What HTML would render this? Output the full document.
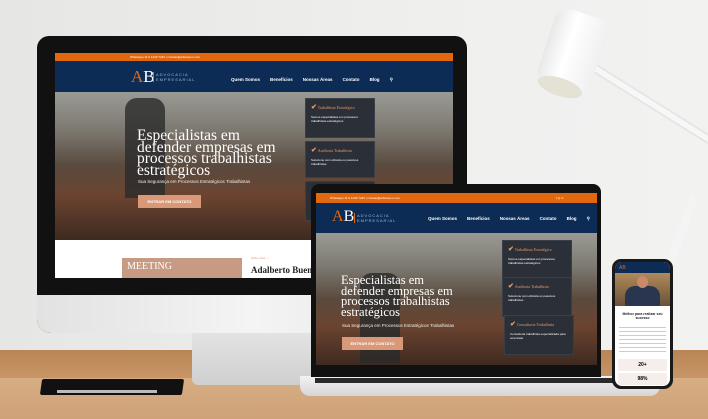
<!DOCTYPE html>
<html><head><meta charset="utf-8"><style>
*{margin:0;padding:0;box-sizing:border-box}
body{width:708px;height:419px;overflow:hidden;position:relative;background:#ebebea;font-family:"Liberation Sans",sans-serif}
.a{position:absolute}
.serif{font-family:"Liberation Serif",serif;color:#fff}
.nav span{margin-left:10px}
.card{position:absolute;background:#2b2f38;color:#fff;border:1px solid #3a3e48}
.card b{color:#e39a6a;font-family:"Liberation Serif",serif;font-weight:normal}
.ck{color:#e39a6a;font-weight:bold}
.hero{background:linear-gradient(180deg,#9a9a94 0%,#7d7a72 25%,#5a4a3e 50%,#6b4430 70%,#3e2a20 100%)}
</style></head><body>
<div class="a" style="left:0;top:0;width:708px;height:350px;background:linear-gradient(90deg,#e6e6e4,#efefee 60%,#f2f2f1)"></div>
<div class="a" style="left:0;top:350px;width:708px;height:28px;background:linear-gradient(#b98556,#c89566)"></div>
<div class="a" style="left:0;top:378px;width:708px;height:41px;background:linear-gradient(#d7ad84,#cfa277)"></div>
<div class="a" style="left:592px;top:70px;width:6px;height:190px;background:#f7f7f7;transform:rotate(-58deg);transform-origin:top left;box-shadow:0 1px 2px #bbb"></div>
<div class="a" style="left:545px;top:12px;width:55px;height:80px;background:linear-gradient(90deg,#e8e8e8,#fff 40%,#f0f0f0);border-radius:14px;transform:rotate(18deg)"></div>
<div class="a" style="left:537px;top:78px;width:46px;height:18px;background:#e4e2d4;border-radius:50%;transform:rotate(18deg)"></div>
<div class="a" style="left:660px;top:190px;width:8px;height:180px;background:#f4f4f4;transform:rotate(20deg)"></div>
<div class="a" style="left:192px;top:330px;width:122px;height:55px;background:linear-gradient(#e4e4e4,#cfcfcf);border-radius:0 0 6px 6px"></div>
<div class="a" style="left:37px;top:36px;width:430px;height:297px;background:#111;border-radius:12px 12px 14px 14px;overflow:hidden">
 <div class="a" style="left:0;top:259px;width:430px;height:38px;background:linear-gradient(90deg,#e2e2e2,#f4f4f4 50%,#e4e4e4)"></div>
</div>
<div class="a" style="left:55px;top:53px;width:398px;height:225px;background:#fff;overflow:hidden">
 <div class="a" style="left:0;top:0;width:398px;height:8px;background:#e2680f;font-size:3px;color:#fff;padding:2px 0 0 75px">Whatsapp 11 9 1240 7240 | contato@advbueno.com</div>
 <div class="a" style="left:0;top:8px;width:398px;height:31px;background:#0d2c55"></div>
 <div class="a serif" style="left:76px;top:14px;font-size:17px;color:#fff"><span style="color:#e2680f">A</span>B</div>
 <div class="a" style="left:98px;top:19px;font-size:4px;color:#9fb6d6;letter-spacing:1px;line-height:5px;border-left:1px solid #e2680f;padding-left:2px">ADVOCACIA<br>EMPRESARIAL</div>
 <div class="a nav" style="left:166px;top:24px;font-size:4.5px;color:#fff;font-weight:bold"><span>Quem Somos</span><span>Benefícios</span><span>Nossas Áreas</span><span>Contato</span><span>Blog</span><span>⚲</span></div>
 <div class="a hero" style="left:0;top:39px;width:398px;height:148px"></div>
 <div class="a" style="left:70px;top:45px;width:40px;height:100px;background:#2a2a2a;border-radius:12px 12px 0 0;opacity:.8"></div>
 <div class="a serif" style="left:82px;top:77px;font-size:15.5px;line-height:11.5px">Especialistas em<br>defender empresas em<br>processos trabalhistas<br>estratégicos</div>
 <div class="a" style="left:83px;top:126px;font-size:4.5px;color:#eee">Sua Segurança em Processos Estratégicos Trabalhistas</div>
 <div class="a" style="left:83px;top:142px;width:63px;height:13px;background:#d99878;color:#fff;font-size:4px;font-weight:bold;text-align:center;line-height:13px">ENTRAR EM CONTATO</div>
 <div class="card" style="left:250px;top:45px;width:70px;height:40px;padding:4px 5px;font-size:3px"><span class="ck" style="font-size:7px">✔</span> <b style="font-size:4px">Trabalhista Estratégico</b><br><br>Somos especialistas em processos trabalhistas estratégicos</div>
 <div class="card" style="left:250px;top:88px;width:70px;height:37px;padding:4px 5px;font-size:3px"><span class="ck" style="font-size:7px">✔</span> <b style="font-size:4px">Auditoria Trabalhista</b><br><br>Solucione com eficácia os passivos trabalhistas</div>
 <div class="card" style="left:250px;top:128px;width:70px;height:40px;padding:4px 5px"><span class="ck" style="font-size:7px">✔</span></div>
 <div class="a" style="left:67px;top:205px;width:120px;height:20px;background:#c79a84"></div>
 <div class="a" style="left:72px;top:208px;font-size:10px;color:#fff;font-family:'Liberation Serif',serif">MEETING</div>
 <div class="a" style="left:196px;top:203px;font-size:3px;color:#e39a6a">Sobre Nós —</div>
 <div class="a" style="left:196px;top:212px;font-size:9px;color:#222;font-family:'Liberation Serif',serif;font-weight:bold">Adalberto Bueno</div>
</div>
<div class="a" style="left:41px;top:379px;width:142px;height:16px;background:#111;border-radius:2px;transform:skewX(-8deg)"></div>
<div class="a" style="left:57px;top:390px;width:100px;height:3px;background:#bbb"></div>
<div class="a" style="left:300px;top:376px;width:360px;height:20px;background:linear-gradient(#f2f2f2,#d6d6d6);border-radius:0 0 10px 10px"></div>
<div class="a" style="left:315px;top:378px;width:300px;height:5px;background:#2a2a2a"></div>
<div class="a" style="left:311px;top:184px;width:290px;height:193px;background:#111;border-radius:8px 8px 0 0"></div>
<div class="a" style="left:316px;top:193px;width:281px;height:172px;background:#fff;overflow:hidden">
 <div class="a" style="left:0;top:0;width:281px;height:10px;background:#e2680f;font-size:3px;color:#fff;padding:3px 0 0 14px">Whatsapp 11 9 1240 7240 | contato@advbueno.com<span style="position:absolute;left:240px">f ◎ in</span></div>
 <div class="a" style="left:0;top:10px;width:281px;height:30px;background:#0d2c55"></div>
 <div class="a serif" style="left:16px;top:15px;font-size:16px"><span style="color:#e2680f">A</span>B</div>
 <div class="a" style="left:38px;top:20px;font-size:4px;color:#9fb6d6;letter-spacing:1px;line-height:5px;border-left:1px solid #e2680f;padding-left:2px">ADVOCACIA<br>EMPRESARIAL</div>
 <div class="a nav" style="left:102px;top:23px;font-size:4.5px;color:#fff;font-weight:bold"><span>Quem Somos</span><span>Benefícios</span><span>Nossas Áreas</span><span>Contato</span><span>Blog</span><span>⚲</span></div>
 <div class="a hero" style="left:0;top:40px;width:281px;height:132px"></div>
 <div class="a" style="left:44px;top:80px;width:40px;height:90px;background:#2a2a2a;border-radius:12px 12px 0 0;opacity:.8"></div>
 <div class="a serif" style="left:25px;top:82px;font-size:12.5px;line-height:10.5px">Especialistas em<br>defender empresas em<br>processos trabalhistas<br>estratégicos</div>
 <div class="a" style="left:26px;top:130px;font-size:4.5px;color:#eee">Sua Segurança em Processos Estratégicos Trabalhistas</div>
 <div class="a" style="left:26px;top:144px;width:61px;height:13px;background:#d99878;color:#fff;font-size:4px;font-weight:bold;text-align:center;line-height:13px">ENTRAR EM CONTATO</div>
 <div class="card" style="left:186px;top:47px;width:70px;height:40px;padding:4px 5px;font-size:3px"><span class="ck" style="font-size:7px">✔</span> <b style="font-size:4px">Trabalhista Estratégico</b><br><br>Somos especialistas em processos trabalhistas estratégicos</div>
 <div class="card" style="left:186px;top:84px;width:70px;height:40px;padding:4px 5px;font-size:3px"><span class="ck" style="font-size:7px">✔</span> <b style="font-size:4px">Auditoria Trabalhista</b><br><br>Solucione com eficácia os passivos trabalhistas</div>
 <div class="card" style="left:188px;top:122px;width:70px;height:40px;padding:4px 5px;font-size:3px"><span class="ck" style="font-size:7px">✔</span> <b style="font-size:4px">Consultoria Trabalhista</b><br><br>Consultoria trabalhista especializada para empresas</div>
</div>
<div class="a" style="left:612px;top:259px;width:61px;height:130px;background:#1a1a1a;border-radius:9px"></div>
<div class="a" style="left:615px;top:262px;width:55px;height:124px;background:#fff;border-radius:7px;overflow:hidden">
 <div class="a" style="left:0;top:0;width:55px;height:11px;background:#0d2c55;font-size:5px;color:#e2680f;padding:3px 0 0 4px">AB</div>
 <div class="a" style="left:0;top:11px;width:55px;height:33px;background:linear-gradient(#b08a5a,#6a5238)"></div>
 <div class="a" style="left:10px;top:24px;width:35px;height:20px;background:#2a3550;border-radius:10px 10px 0 0"></div>
 <div class="a" style="left:22px;top:14px;width:11px;height:12px;background:#c88a6a;border-radius:50%"></div>
 <div class="a" style="left:4px;top:50px;width:47px;font-size:3.5px;text-align:center;color:#222;font-weight:bold">Melhor para realizar seu sucesso</div>
 <div class="a" style="left:4px;top:62px;width:47px;height:30px;background:repeating-linear-gradient(#fff 0 3px,#ccc 3px 4px)"></div>
 <div class="a" style="left:3px;top:97px;width:49px;height:12px;background:#f6eeea;font-size:5px;font-weight:bold;text-align:center;line-height:12px">20+</div>
 <div class="a" style="left:3px;top:111px;width:49px;height:12px;background:#f6eeea;font-size:5px;font-weight:bold;text-align:center;line-height:12px">98%</div>
</div>
</body></html>
